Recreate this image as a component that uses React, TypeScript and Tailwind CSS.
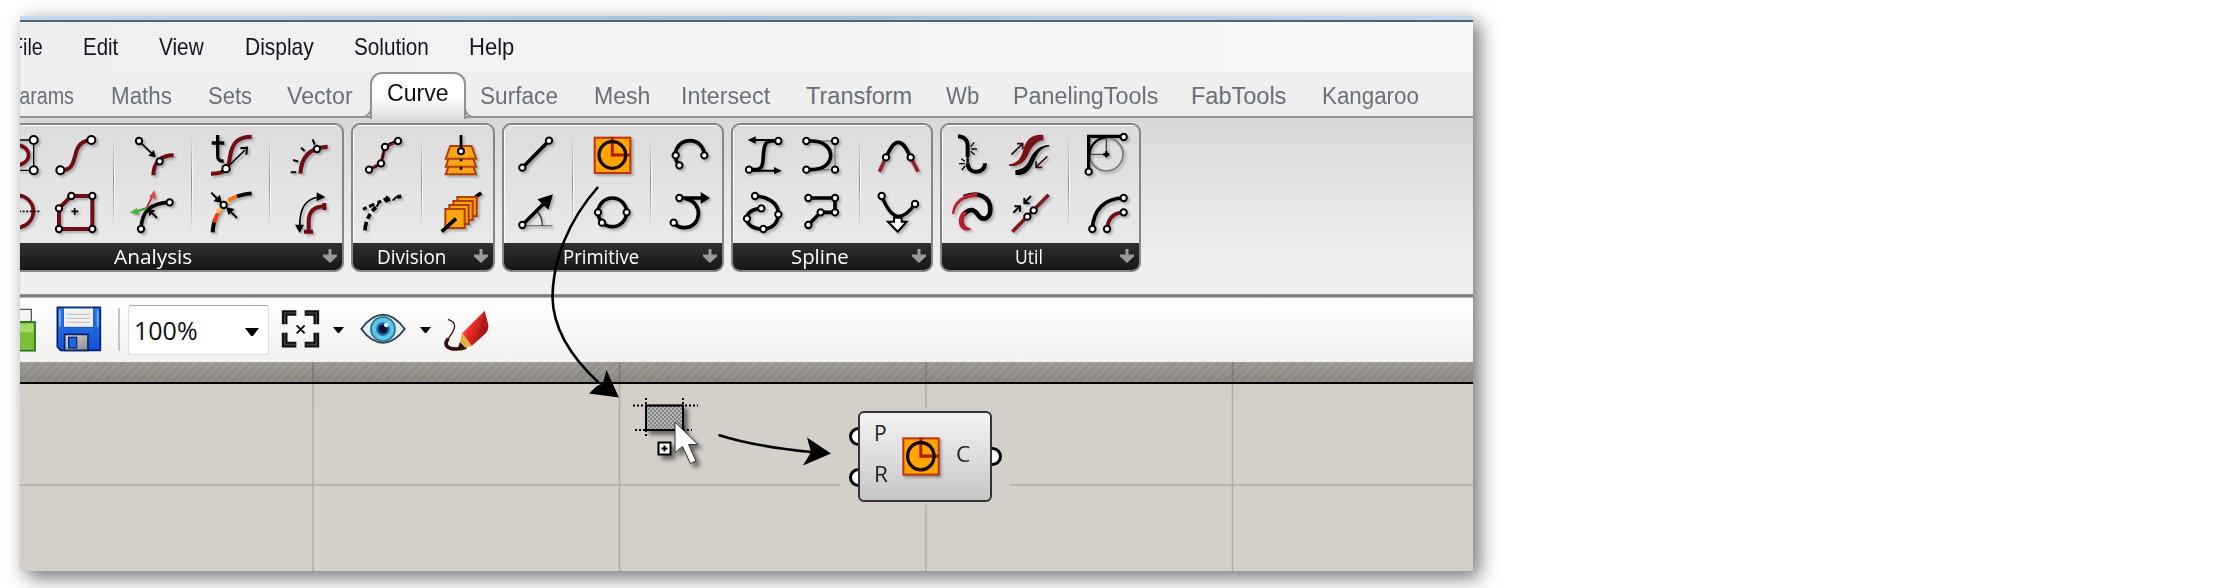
import React, { useLayoutEffect, useRef } from "react";

const DARK_RED = "#6f0d15";

/** Single line of text stretched or squeezed to the width of its box. */
function Fit({ children, className = "" }: { children: string; className?: string }) {
  const box = useRef<HTMLSpanElement>(null);
  const text = useRef<HTMLSpanElement>(null);
  useLayoutEffect(() => {
    if (!box.current || !text.current) return;
    const ratio = box.current.clientWidth / text.current.offsetWidth;
    text.current.style.transform = `scaleX(${ratio})`;
  }, []);
  return (
    <span ref={box} className={`block shrink-0 whitespace-nowrap ${className}`}>
      <span ref={text} className="inline-block origin-left">
        {children}
      </span>
    </span>
  );
}

/** Control point of a curve. */
function N({ x, y, r = 9.5 }: { x: number; y: number; r?: number }) {
  return <circle cx={x} cy={y} r={r} fill="#fff" stroke="#000" strokeWidth="6" />;
}

function Icon({ x, row, children }: { x: number; row: 1 | 2; children: React.ReactNode }) {
  return (
    <svg
      className="block h-[58px] w-[58px] drop-shadow-[2px_2px_1px_rgba(0,0,0,0.25)]"
      viewBox={`${x} ${row === 1 ? 378 : 552} 174 174`}
      fill="none"
      stroke="#000"
      strokeWidth="9"
    >
      {children}
    </svg>
  );
}

function Cell({ children }: { children: React.ReactNode }) {
  return <div className="-mt-px flex w-[58px] shrink-0 flex-col">{children}</div>;
}

function Divider() {
  return (
    <div className="flex w-5 shrink-0 justify-center pt-2 pb-3">
      <div className="w-px bg-linear-to-b from-transparent via-[#8d8d8d] to-transparent" />
      <div className="w-px bg-linear-to-b from-transparent via-white to-transparent" />
    </div>
  );
}

function Group({
  title,
  titleClass,
  className,
  children,
}: {
  title: string;
  titleClass: string;
  className: string;
  children: React.ReactNode;
}) {
  return (
    <section
      className={`flex h-[149px] shrink-0 flex-col overflow-hidden rounded-[9px] border-2 border-[#868686] bg-linear-to-b from-[#dcdcdc] to-[#ececec] ${className}`}
    >
      <div className="flex h-[118px] shrink-0 border-t border-l border-white pt-px">{children}</div>
      <div className="flex flex-1 items-center bg-linear-to-b from-[#303030] to-[#171717]">
        <div className="flex flex-1 justify-center font-['Open_Sans',sans-serif] text-[20px] leading-[26px] text-white">
          <Fit className={titleClass}>{title}</Fit>
        </div>
        <svg className="h-[27px] w-6 shrink-0" viewBox="0 0 24 27">
          <path d="M10.500 6h3v5.500h5.500v2L12 20l-7-6.500v-2h5.500z" fill="#9a9a9a" />
        </svg>
      </div>
    </section>
  );
}

function CircleGlyph() {
  return (
    <>
      <rect x="794" y="413" width="107" height="106" fill="#ffa400" stroke="#bf3410" strokeWidth="6" />
      <path d="M847 411V465H902" stroke="#b31c00" strokeWidth="9" />
      <circle cx="847" cy="465" r="40" stroke="#160b00" strokeWidth="10" />
    </>
  );
}

function Analysis() {
  return (
    <Group title="Analysis" titleClass="w-[78px]" className="w-[359px]">
      <Cell>
        <Icon x={-33} row={1}>
          <path d="M0 420H104V511H0" strokeWidth="4" />
          <path d="M40 434C105 430 105 500 40 496" stroke={DARK_RED} strokeWidth="11" />
          <N x={104} y={420} r={12} />
          <N x={104} y={511} r={12} />
        </Icon>
        <Icon x={-33} row={2}>
          <circle cx="55" cy="634" r="48" stroke={DARK_RED} strokeWidth="11" />
          <path d="M60 634H125" strokeWidth="5" strokeDasharray="6 5" />
        </Icon>
      </Cell>
      <Cell>
        <Icon x={141} row={1}>
          <path d="M184 511C220 511 222 490 230 462C236 434 250 421 277 420" stroke={DARK_RED} strokeWidth="12" />
          <N x={184} y={511} r={12} />
          <N x={277} y={420} r={12} />
        </Icon>
        <Icon x={141} row={2}>
          <path d="M180 687V625L217 588H280V687Z" stroke={DARK_RED} strokeWidth="12" />
          <path d="M217 634H238M227 624V645" strokeWidth="5" />
          <N x={180} y={687} />
          <N x={180} y={625} />
          <N x={217} y={588} />
          <N x={280} y={588} />
          <N x={280} y={687} />
        </Icon>
      </Cell>
      <Divider />
      <Cell>
        <Icon x={375} row={1}>
          <path d="M463 526C463 488 484 466 524 466" stroke={DARK_RED} strokeWidth="12" />
          <path d="M420 423L462 464" strokeWidth="5" />
          <path d="M470 472l-22-5 17-17z" fill="#000" stroke="none" />
          <N x={420} y={423} />
          <N x={482} y={484} />
        </Icon>
        <Icon x={375} row={2}>
          <path d="M426 687C428 635 454 608 512 607" strokeWidth="11" />
          <path d="M443 624L461 586" stroke="#b9363c" strokeWidth="6" />
          <path d="M467 570l4 28-20-8z" fill="#d6474d" stroke="none" />
          <path d="M443 624L412 634" stroke="#3a9a30" strokeWidth="6" />
          <path d="M392 638l22-14 6 20z" fill="#43b537" stroke="none" />
          <path d="M474 654L456 636" strokeWidth="6" />
          <path d="M446 628l23 3-18 18z" fill="#000" stroke="none" />
          <N x={426} y={687} />
          <N x={512} y={607} />
        </Icon>
      </Cell>
      <Divider />
      <Cell>
        <Icon x={609} row={1}>
          <path d="M636 521C690 521 688 500 693 470C700 425 720 410 758 410" stroke={DARK_RED} strokeWidth="12" />
          <path d="M656 405V468Q656 485 674 483M638 429H676" strokeWidth="10" />
          <path d="M681 506L738 450" strokeWidth="5" />
          <path d="M724 445L744 443L742 464" strokeWidth="6" />
          <N x={681} y={506} r={11} />
        </Icon>
        <Icon x={609} row={2}>
          <path d="M641 697C642 680 645 665 650 655" strokeWidth="12" />
          <path d="M646 668C650 650 656 640 664 629" stroke="#ee3b16" strokeWidth="12" />
          <path d="M656 640C664 620 674 610 694 600" stroke="#ffc04e" strokeWidth="12" />
          <path d="M688 601C704 592 712 590 722 587" stroke="#ff7218" strokeWidth="12" />
          <path d="M714 589C725 585 740 582 758 580" strokeWidth="11" />
          <path d="M637 578L658 600M714 654L694 634" strokeWidth="6" />
          <path d="M668 608l-25-4 20-20zM682 622l25 5-19 18z" fill="#000" stroke="none" />
          <N x={674} y={615} />
        </Icon>
      </Cell>
      <Divider />
      <Cell>
        <Icon x={843} row={1}>
          <path d="M904 521C906 475 930 443 986 440" stroke={DARK_RED} strokeWidth="12" />
          <path d="M875 517H892M882 480L898 485M906 443L917 453M941 418L947 434" strokeWidth="6" />
          <N x={954} y={447} />
        </Icon>
        <Icon x={843} row={2}>
          <path d="M929 695V665C929 635 945 620 976 619M915 695H942M976 609V630" stroke={DARK_RED} strokeWidth="12" />
          <path d="M902 680C902 625 918 598 958 591" strokeWidth="5" />
          <path d="M979 591l-26-14v27zM902 699l-14-25h27z" fill="#000" stroke="none" />
        </Icon>
      </Cell>
    </Group>
  );
}

function Division() {
  return (
    <Group title="Division" titleClass="w-[69px]" className="w-[144px]">
      <Cell>
        <Icon x={72} row={1}>
          <path d="M117 509L153 490L165 441L204 423" stroke="#8b2230" strokeWidth="10" />
          <path d="M117 509C150 500 157 485 160 462C163 440 175 426 204 423" strokeWidth="4" />
          <N x={117} y={509} />
          <N x={153} y={490} />
          <N x={165} y={441} />
          <N x={204} y={423} />
        </Icon>
        <Icon x={72} row={2}>
          <path d="M105 691C107 645 140 600 214 589" strokeWidth="11" strokeDasharray="26 10 16 11 16 32 17 22" />
          <path d="M99 628L178 592" strokeWidth="9" strokeDasharray="12 8 17 11" />
          <path d="M140 620L150 602M164 602L172 588M188 602L200 590" strokeWidth="6" />
        </Icon>
      </Cell>
      <Divider />
      <Cell>
        <Icon x={306} row={1}>
          {[489, 466, 442].map((y) => (
            <path key={y} d={`M361 ${y - 4}H425L438 ${y + 34}H347Z`} fill="#f9a514" stroke="#b3400c" strokeWidth="6" />
          ))}
          <path d="M393 405V446M393 477V484M393 502V509" strokeWidth="8" />
          <N x={393} y={454} r={9} />
        </Icon>
        <Icon x={306} row={2}>
          <path d="M436 591L454 579" strokeWidth="11" />
          {[0, 1, 2, 3].map((i) => (
            <rect
              key={i}
              x={382 - i * 12}
              y={591 + i * 12}
              width="58"
              height="57"
              fill="#f9a50d"
              stroke="#b23d08"
              strokeWidth="6"
            />
          ))}
          <path d="M335 695L378 656" strokeWidth="11" />
        </Icon>
      </Cell>
    </Group>
  );
}

function Primitive() {
  return (
    <Group title="Primitive" titleClass="w-[76px]" className="w-[222px]">
      <Cell>
        <Icon x={525} row={1}>
          <path d="M577 503L657 422" strokeWidth="11" />
          <N x={577} y={503} />
          <N x={657} y={422} />
        </Icon>
        <Icon x={525} row={2}>
          <path d="M577 677H668" stroke="#777" strokeWidth="4" />
          <path d="M620 633Q637 650 637 677" stroke="#333" strokeWidth="4" />
          <path d="M577 675L640 612" strokeWidth="11" />
          <path d="M669 583L655 629L622 598Z" fill="#000" stroke="none" />
          <N x={577} y={675} />
        </Icon>
      </Cell>
      <Divider />
      <Cell>
        <Icon x={759} row={1}>
          <CircleGlyph />
        </Icon>
        <Icon x={759} row={2}>
          <circle cx="847" cy="637" r="43" strokeWidth="11" />
          <N x={804} y={637} />
          <N x={890} y={637} />
          <N x={816} y={668} />
        </Icon>
      </Cell>
      <Divider />
      <Cell>
        <Icon x={993} row={1}>
          <path d="M1048 496C1018 462 1046 422 1080 422C1104 422 1122 440 1123 466" strokeWidth="11" />
          <N x={1048} y={496} />
          <N x={1037} y={466} />
          <N x={1123} y={466} />
        </Icon>
        <Icon x={993} row={2}>
          <path d="M1048 594H1120M1066 596C1122 606 1116 683 1062 683C1048 683 1040 678 1031 668" strokeWidth="11" />
          <path d="M1140 594L1112 576V612Z" fill="#000" stroke="none" />
          <N x={1048} y={594} />
          <N x={1031} y={668} />
        </Icon>
      </Cell>
    </Group>
  );
}

function Spline() {
  return (
    <Group title="Spline" titleClass="w-[58px]" className="w-[202px]">
      <Cell>
        <Icon x={102} row={1}>
          <path d="M147 509H165C190 509 188 490 190 466C192 440 194 423 215 423H235" strokeWidth="11" />
          <path d="M235 420H160M147 512H230" strokeWidth="6" />
          <path d="M143 420l24-11v22zM245 512l-23-11v22z" fill="#000" stroke="none" />
          <N x={235} y={423} />
          <N x={147} y={509} />
        </Icon>
        <Icon x={102} row={2}>
          <path d="M165 588C205 590 236 610 235 643C234 670 215 687 190 687C165 687 141 678 141 656C141 636 160 627 184 625" strokeWidth="11" />
          <N x={165} y={588} />
          <N x={235} y={643} />
          <N x={190} y={687} />
          <N x={141} y={656} />
          <N x={184} y={625} />
        </Icon>
      </Cell>
      <Cell>
        <Icon x={276} row={1}>
          <path d="M319 423H405V509H319" stroke="#777" strokeWidth="4" />
          <path d="M319 423H335C410 423 412 509 335 509H319" strokeWidth="11" />
          <N x={319} y={423} />
          <N x={405} y={423} />
          <N x={405} y={509} />
          <N x={319} y={509} />
        </Icon>
        <Icon x={276} row={2}>
          <path d="M325 594H405V637H362L325 675" strokeWidth="11" />
          <N x={325} y={594} />
          <N x={405} y={594} />
          <N x={405} y={637} />
          <N x={362} y={637} />
          <N x={325} y={675} />
        </Icon>
      </Cell>
      <Divider />
      <Cell>
        <Icon x={510} row={1}>
          <path d="M538 515L558 472M654 515L632 472" stroke="#98222a" strokeWidth="11" />
          <path d="M558 472C575 437 583 427 595 427C607 427 616 437 632 472" strokeWidth="11" />
          <N x={558} y={472} />
          <N x={632} y={472} />
        </Icon>
        <Icon x={510} row={2}>
          <path d="M545 588C560 625 578 649 596 649C612 649 625 640 645 612" strokeWidth="10" />
          <path d="M582 653H605V665H620L593 695L564 665H582Z" fill="#fff" strokeWidth="6" />
          <N x={545} y={588} />
          <N x={645} y={612} />
        </Icon>
      </Cell>
    </Group>
  );
}

function Util() {
  return (
    <Group title="Util" titleClass="w-[28px]" className="w-[201px]">
      <Cell>
        <Icon x={729} row={1}>
          <path d="M774 409C796 411 804 420 803 445V470" strokeWidth="12" />
          <path d="M803 490C805 526 855 522 855 490" strokeWidth="12" />
          <path d="M803 445V490" strokeWidth="7" />
          <path d="M812 440L823 427M814 447H831M812 454L824 464M794 484L784 476M794 491H777M796 498L785 510" strokeWidth="4" />
        </Icon>
        <Icon x={729} row={2}>
          <path d="M792 591C835 573 872 590 871 630C870 655 852 662 838 650C830 640 826 629 813 630C803 631 796 637 790 645" strokeWidth="14" />
          <path
            d="M756 642C758 605 790 578 832 579V592C796 590 770 606 762 642Z"
            fill="#bd2028"
            stroke="none"
          />
          <path
            d="M815 686Q794 699 781 682C772 663 776 646 792 631L801 641C788 655 790 669 798 678Q803 683 815 686Z"
            fill="#b3202a"
            stroke="none"
          />
        </Icon>
      </Cell>
      <Cell>
        <Icon x={903} row={1}>
          <path
            d="M927 493C960 488 962 470 970 450C980 415 998 402 1030 405V420C1008 425 995 440 985 463C972 492 952 501 927 497Z"
            fill="#7b0f17"
            stroke="none"
          />
          <path
            d="M1048 435C1018 436 1002 452 990 476C980 499 967 507 946 511V524C980 530 993 505 1004 480C1014 457 1024 443 1048 439Z"
            fill="#060606"
            stroke="none"
          />
          <path d="M934 464L965 434M951 431H968V448M1042 469L1010 499M1008 484V502H1027" stroke="#301014" strokeWidth="5" />
        </Icon>
        <Icon x={903} row={2}>
          <path d="M937 695L1046 584" stroke="#7e1920" strokeWidth="11" />
          <path d="M993 588L976 606M973 594V610H989M940 638L957 622M943 619H960V635" strokeWidth="6" />
          <N x={1001} y={631} />
          <N x={982} y={650} />
        </Icon>
      </Cell>
      <Divider />
      <Cell>
        <Icon x={57} row={1}>
          <circle cx="139" cy="463" r="50" stroke="#777" strokeWidth="5" />
          <path d="M89 463C89 436 112 413 139 413" strokeWidth="7" />
          <path d="M139 463V413M139 463H89" stroke="#444" strokeWidth="4" />
          <path d="M86 515V409H191" strokeWidth="10" />
          <path d="M130 463H148M139 454V472" strokeWidth="8" />
          <N x={86} y={515} />
          <N x={191} y={411} />
        </Icon>
        <Icon x={57} row={2}>
          <path d="M97 687C100 628 135 594 191 594" strokeWidth="11" />
          <path d="M141 687C144 655 162 638 191 637" stroke={DARK_RED} strokeWidth="11" />
          <N x={97} y={687} />
          <N x={141} y={687} />
          <N x={191} y={594} />
          <N x={191} y={637} />
        </Icon>
      </Cell>
    </Group>
  );
}

function Caret({ className }: { className: string }) {
  return (
    <svg className={`shrink-0 ${className}`} viewBox="0 0 12 7" preserveAspectRatio="none">
      <path d="M0 0H12L6.800 7H5.200Z" />
    </svg>
  );
}

function Toolbar() {
  return (
    <div className="flex h-[64px] shrink-0 items-start bg-linear-to-b from-white to-[#f0f0ef]">
      <svg className="mt-2 h-12 w-[18px] shrink-0" viewBox="60 78 54 144">
        <path d="M50 88H94V125H50" fill="#f4f4f4" stroke="#555" strokeWidth="4" />
        <rect x="40" y="126" width="65" height="86" fill="#79bf38" stroke="#2b6d1c" strokeWidth="5" />
        <rect x="40" y="131" width="60" height="26" fill="#a5d86c" />
      </svg>
      <svg className="mt-2 ml-[18px] h-12 w-[46px] shrink-0" viewBox="168 78 138 144">
        <defs>
          <linearGradient id="disk" x1="0" y1="0" x2="0" y2="1">
            <stop offset="0" stopColor="#2f7fe6" />
            <stop offset="1" stopColor="#1250d8" />
          </linearGradient>
          <linearGradient id="steel" x1="0" y1="0" x2="1" y2="1">
            <stop offset="0" stopColor="#ddd" />
            <stop offset="1" stopColor="#888" />
          </linearGradient>
        </defs>
        <path d="M172 82H301V211H182L172 201Z" fill="url(#disk)" stroke="#0b1f66" strokeWidth="5" strokeLinejoin="round" />
        <path d="M180 92V140M293 92V140" stroke="#67b3ff" strokeWidth="5" />
        <rect x="190" y="84" width="91" height="58" fill="#f0f0ee" stroke="#1a4aa8" strokeWidth="3" />
        <path d="M201 103H270M201 115H270M201 127H270" stroke="#c6c6c6" strokeWidth="4" />
        <path d="M194 211V163H264V211Z" fill="url(#steel)" stroke="#0b2266" strokeWidth="5" />
        <rect x="206" y="172" width="24" height="32" fill="#1f68e0" stroke="#0b2a7a" strokeWidth="4" />
      </svg>
      <div className="mt-[10px] ml-4 h-[43px] w-[2px] shrink-0 bg-[#c4c4c4]" />
      <div className="mt-[7px] ml-[8px] flex h-[50px] w-[141px] shrink-0 items-center rounded-[3px] border border-[#dedede] border-t-[#a5a5a5] bg-white">
        <div className="ml-[5px] font-['Open_Sans',sans-serif] text-[25px] leading-[46px] text-[#111]">
          <Fit className="w-[64px]">100%</Fit>
        </div>
        <Caret className="mt-1 ml-[47px] h-[8px] w-[14px]" />
      </div>
      <svg className="mt-[11px] ml-[12px] h-[40px] w-[40px] shrink-0" viewBox="846 87 120 120" fill="none">
        <path d="M857 133V99H892M917 99H952V133M952 158V194H917M892 194H857V158" stroke="#101010" strokeWidth="17" />
        <path d="M857 131V99H890M919 99H952V131M952 160V194H919M890 194H857V160" stroke="#3a3f3f" strokeWidth="5" />
        <path d="M893 136L917 160M917 136L893 160" stroke="#111" strokeWidth="6" />
      </svg>
      <Caret className="mt-[29px] ml-[12px] h-[6px] w-[11px]" />
      <svg className="mt-[15px] ml-[16px] h-[32px] w-[46px] shrink-0" viewBox="1081 99 138 96">
        <path d="M1085 147Q1115 104 1150 104Q1185 104 1215 147Q1185 188 1150 188Q1115 188 1085 147Z" fill="#dff0f4" stroke="#33464d" strokeWidth="6" />
        <circle cx="1150" cy="147" r="36" fill="#5fc4e6" stroke="#236d8c" strokeWidth="5" />
        <circle cx="1150" cy="147" r="20" fill="#1d5f9e" />
        <circle cx="1150" cy="147" r="13" fill="#06142c" />
        <circle cx="1160" cy="135" r="7" fill="#d8f6ff" />
      </svg>
      <Caret className="mt-[29px] ml-[14px] h-[6px] w-[11px]" />
      <svg className="mt-[12px] ml-[13px] h-[42px] w-[46px] shrink-0" viewBox="1331 90 138 126">
        <defs>
          <linearGradient id="pen" x1="0" y1="0" x2="1" y2="0.6">
            <stop offset="0" stopColor="#ffb4a8" />
            <stop offset="0.45" stopColor="#ee2b26" />
            <stop offset="1" stopColor="#8e1513" />
          </linearGradient>
        </defs>
        <path d="M1343 118C1375 128 1362 150 1348 170C1330 195 1340 208 1368 208" fill="none" stroke="#340d0d" strokeWidth="4" />
        <path d="M1344 176C1328 195 1342 207 1368 207C1382 207 1390 205 1397 201" fill="none" stroke="#340d0d" strokeWidth="11" />
        <path d="M1453 92L1385 160Q1400 178 1414 198L1458 158Q1466 146 1464 134Z" fill="url(#pen)" />
        <path d="M1453 94L1432 172L1456 146Z" fill="#8e1513" opacity="0.35" />
        <path d="M1385 160L1414 198L1374 207Z" fill="#e5ae3e" />
        <path d="M1379 187L1394 202L1370 211Z" fill="#2a0a05" />
      </svg>
    </div>
  );
}

function CanvasGrid() {
  return (
    <div className="relative flex flex-1 flex-col bg-[#d4cfc8]">
      <div className="h-5 shrink-0 bg-[linear-gradient(to_bottom,rgba(160,160,155,0.55),rgba(130,125,120,0.55)),repeating-linear-gradient(135deg,#8f8b83_0px,#8f8b83_3px,#a09e98_3px,#a09e98_6px)]" />
      <div className="h-[2px] shrink-0 bg-black" />
      <div className="h-6 shrink-0 bg-linear-to-b from-[#d3cfc5] to-[#d4cfc8]" />
      <svg className="absolute inset-0 h-full w-full" viewBox="20 362 1453 209" preserveAspectRatio="none">
        <path d="M313 362V571M619.500 362V571M926 362V571M1232.500 362V571M20 485H1473" stroke="#000" strokeOpacity="0.16" strokeWidth="1.600" />
        <rect x="840" y="409" width="170" height="96" rx="6" fill="#d4cfc8" />
      </svg>
    </div>
  );
}

function CircleComponent() {
  return (
    <div className="absolute top-[395px] left-[838px] h-[91px] w-[134px]">
      <div className="absolute top-[16px] -left-[9px] h-[19px] w-[19px] rounded-full border-[3px] border-black bg-white" />
      <div className="absolute top-[57px] -left-[9px] h-[19px] w-[19px] rounded-full border-[3px] border-black bg-white" />
      <div className="absolute top-[36px] -right-[10px] h-[19px] w-[19px] rounded-full border-[3px] border-black bg-white" />
      <div className="relative flex h-full w-full items-center rounded-[6px] border-2 border-[#333] bg-linear-to-b from-[#f4f4f4] to-[#c6c6c6] font-['Open_Sans',sans-serif] text-[21px] leading-[41px] text-[#222]">
        <div className="flex w-[42px] flex-col pb-[5px] pl-[14px]">
          <Fit className="w-[13px]">P</Fit>
          <Fit className="w-[14px]">R</Fit>
        </div>
        <svg className="h-[39px] w-[38px] drop-shadow-[2px_2px_1px_rgba(0,0,0,0.3)]" viewBox="790 409 115 114" preserveAspectRatio="none" fill="none">
          <CircleGlyph />
        </svg>
        <div className="pb-[5px] pl-[16px]">
          <Fit className="w-[14px]">C</Fit>
        </div>
      </div>
    </div>
  );
}

function Annotations() {
  return (
    <svg className="pointer-events-none absolute inset-0 h-full w-full" viewBox="20 16 1453 555" fill="none">
      <defs>
        <pattern id="mesh" width="4" height="4" patternUnits="userSpaceOnUse">
          <rect width="4" height="4" fill="#b4b4b4" />
          <path d="M0 0H2V2H0ZM2 2H4V4H2Z" fill="#858585" />
        </pattern>
        <filter id="soft" x="-30%" y="-30%" width="180%" height="180%">
          <feDropShadow dx="4" dy="4" stdDeviation="2" floodOpacity="0.5" />
        </filter>
      </defs>
      <path d="M598 187C568 221 553 260 552.500 297C553 330 573 359 599 383" stroke="#000" strokeWidth="2.600" />
      <path d="M619 397.500L606.500 370L603 383L597 386L589 393.500Z" fill="#000" />
      <path d="M718.500 435C750 445 780 449 811 452" stroke="#000" strokeWidth="2.600" />
      <path d="M831 453.500L807 437.500L811 452L803 465.500Z" fill="#000" />
      <g filter="url(#soft)">
        <rect x="646" y="405.500" width="37" height="24.500" fill="url(#mesh)" stroke="#000" strokeWidth="2" />
      </g>
      <path d="M633 405.500H698M635 430H692M646 398V437M683 398V437" stroke="#000" strokeWidth="2" strokeDasharray="2 2" />
      <g filter="url(#soft)">
        <rect x="658.500" y="442.500" width="12" height="12" fill="#fff" stroke="#000" strokeWidth="2" />
        <path d="M661.500 448.500H667.500M664.500 445.500V451.500" stroke="#000" strokeWidth="2" />
        <path d="M675 422V452.500L682.500 446.500L690.500 463.500L696 461L688.500 444.500H698Z" fill="#fff" stroke="#333" strokeWidth="1" />
      </g>
    </svg>
  );
}

export default function App() {
  return (
    <main className="h-[588px] w-full overflow-hidden bg-white pt-4 pl-5 font-['Liberation_Sans',sans-serif]">
      <div className="h-[555px] w-[1453px] shadow-[7px_7px_18px_rgba(0,0,0,0.5),0_0_14px_rgba(0,0,0,0.08)]">
        <div className="relative flex h-full w-full flex-col overflow-hidden bg-[#efefef]">
          <div className="h-[4px] shrink-0 bg-linear-to-r from-[#c3d9f0] via-[#a5c2e4] to-[#c3d9f0]" />
          <div className="h-[2px] shrink-0 bg-[#56636f]" />
          <nav className="flex h-[50px] shrink-0 bg-linear-to-r from-[#efefef] to-[#f8f8f8] pt-[9px] text-[24px] leading-[32px] text-[#15151f]">
            <Fit className="-ml-[9px] w-[32px]">File</Fit>
            <Fit className="ml-[40px] w-[35px]">Edit</Fit>
            <Fit className="ml-[41px] w-[45px]">View</Fit>
            <Fit className="ml-[41px] w-[69px]">Display</Fit>
            <Fit className="ml-[40px] w-[75px]">Solution</Fit>
            <Fit className="ml-[40px] w-[45px]">Help</Fit>
          </nav>
          <div className="flex h-[46px] shrink-0 border-b-2 border-[#929292] pt-[8px] text-[23.500px] leading-[32px] text-[#6b7077]">
            <Fit className="-ml-[14px] w-[68px]">Params</Fit>
            <Fit className="ml-[37px] w-[61px]">Maths</Fit>
            <Fit className="ml-[36px] w-[44px]">Sets</Fit>
            <Fit className="ml-[35px] w-[66px]">Vector</Fit>
            <div className="relative -mt-[8px] ml-[17px] flex h-[47px] w-[96px] shrink-0 justify-center rounded-t-[12px] border-2 border-b-0 border-[#929292] bg-linear-to-b from-white from-50% to-[#dedede] pt-[3px] text-[#111]">
              <div className="absolute bottom-px -left-[11px] h-[12px] w-[11px] rounded-br-[10px] border-r-2 border-b-2 border-[#929292] bg-[#efefef]" />
              <div className="absolute -right-[11px] bottom-px h-[12px] w-[11px] rounded-bl-[10px] border-b-2 border-l-2 border-[#929292] bg-[#efefef]" />
              <Fit className="w-[62px]">Curve</Fit>
            </div>
            <Fit className="ml-[14px] w-[78px]">Surface</Fit>
            <Fit className="ml-[36px] w-[56px]">Mesh</Fit>
            <Fit className="ml-[31px] w-[89px]">Intersect</Fit>
            <Fit className="ml-[36px] w-[106px]">Transform</Fit>
            <Fit className="ml-[34px] w-[33px]">Wb</Fit>
            <Fit className="ml-[34px] w-[145px]">PanelingTools</Fit>
            <Fit className="ml-[33px] w-[95px]">FabTools</Fit>
            <Fit className="ml-[36px] w-[97px]">Kangaroo</Fit>
          </div>
          <div className="flex h-[176px] shrink-0 bg-linear-to-b from-[#d8d8d8] to-[#efefef] to-80% pt-[5px]">
            <div className="-ml-[35px] flex gap-[7px]">
              <Analysis />
              <Division />
              <Primitive />
              <Spline />
              <Util />
            </div>
          </div>
          <div className="h-[4px] shrink-0 bg-linear-to-b from-[#a9a9a9] via-[#6b6b6b] to-[#c8c8c8]" />
          <Toolbar />
          <CanvasGrid />
          <CircleComponent />
          <Annotations />
        </div>
      </div>
    </main>
  );
}
